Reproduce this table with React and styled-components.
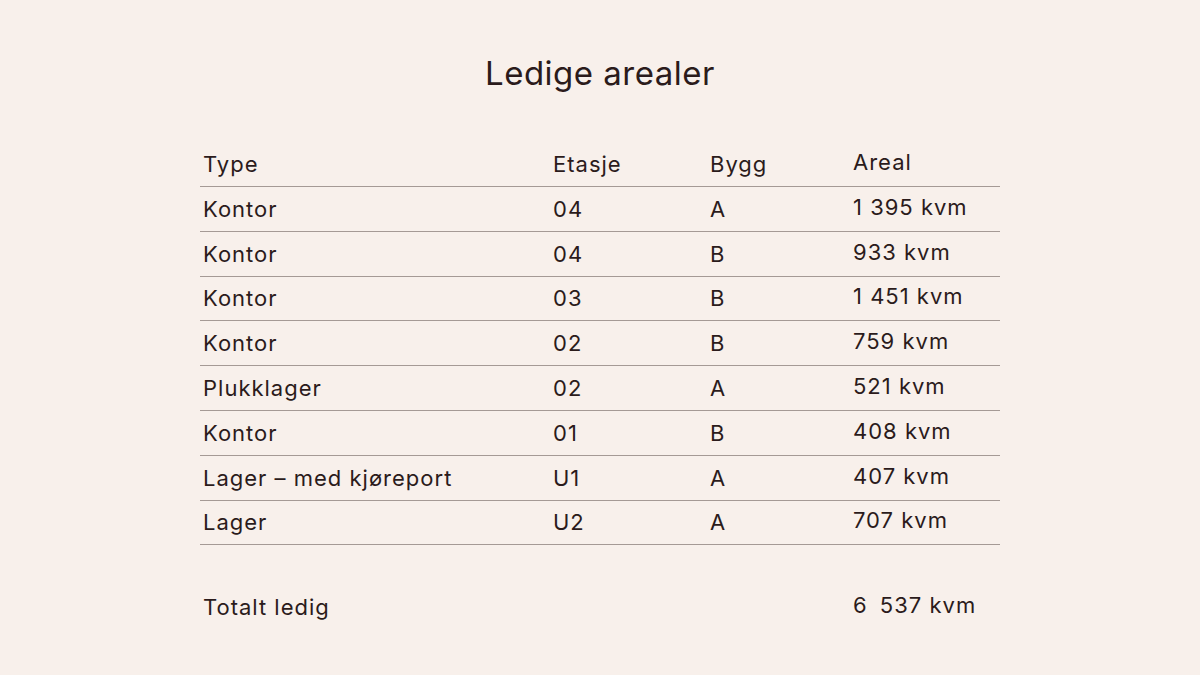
import React from 'react';
import styled, { createGlobalStyle } from 'styled-components';

const rows = [
  { type: 'Kontor', floor: '04', building: 'A', area: '1 395 kvm' },
  { type: 'Kontor', floor: '04', building: 'B', area: '933 kvm' },
  { type: 'Kontor', floor: '03', building: 'B', area: '1 451 kvm' },
  { type: 'Kontor', floor: '02', building: 'B', area: '759 kvm' },
  { type: 'Plukklager', floor: '02', building: 'A', area: '521 kvm' },
  { type: 'Kontor', floor: '01', building: 'B', area: '408 kvm' },
  { type: 'Lager – med kjøreport', floor: 'U1', building: 'A', area: '407 kvm' },
  { type: 'Lager', floor: 'U2', building: 'A', area: '707 kvm' },
];

const App = () => {
  return (
    <>
      <GlobalStyle />
      <Page>
        <Title>Ledige arealer</Title>
        <Table>
          <HeaderRow>
            <Cell>Type</Cell>
            <Cell>Etasje</Cell>
            <Cell>Bygg</Cell>
            <Cell $raised>Areal</Cell>
          </HeaderRow>
          {rows.map((r, i) => (
            <Row key={i}>
              <Cell>{r.type}</Cell>
              <Cell>{r.floor}</Cell>
              <Cell>{r.building}</Cell>
              <Cell $raised>{r.area}</Cell>
            </Row>
          ))}
          <TotalRow>
            <Cell>Totalt ledig</Cell>
            <Cell />
            <Cell />
            <Cell $raised>6{'\u00a0\u2009'}537 kvm</Cell>
          </TotalRow>
        </Table>
      </Page>
    </>
  );
};

export default App;

/* --- STYLED COMPONENTS --- */

const GlobalStyle = createGlobalStyle`
  html, body {
    margin: 0;
    padding: 0;
    background: #f8f0eb;
  }
`;

const Page = styled.div`
  width: 1200px;
  height: 675px;
  box-sizing: border-box;
  padding-top: 50px;
  display: flex;
  flex-direction: column;
  align-items: center;
  background: #f8f0eb;
  color: #2b1b1b;
  font-family: Inter, "Noto Sans", sans-serif;
`;

const Title = styled.h1`
  margin: 0;
  font-size: 33px;
  font-weight: 400;
  line-height: 46px;
  letter-spacing: 0.5px;
`;

const Table = styled.div`
  width: 800px;
  margin-top: 45px;
  display: flex;
  flex-direction: column;
`;

const Row = styled.div`
  display: grid;
  grid-template-columns: 350px 157px 143px 150px;
  align-items: center;
  height: 44.8px;
  border-bottom: 1px solid #a59a95;
  box-sizing: border-box;
  font-size: 22px;
  letter-spacing: 1px;
`;

const HeaderRow = styled(Row)`
  height: 46px;
`;

const TotalRow = styled(Row)`
  margin-top: 39px;
  border-bottom: none;
`;

const Cell = styled.div`
  padding-left: 3px;
  padding-bottom: ${(p) => (p.$raised ? '4px' : '0')};
  white-space: nowrap;
`;
